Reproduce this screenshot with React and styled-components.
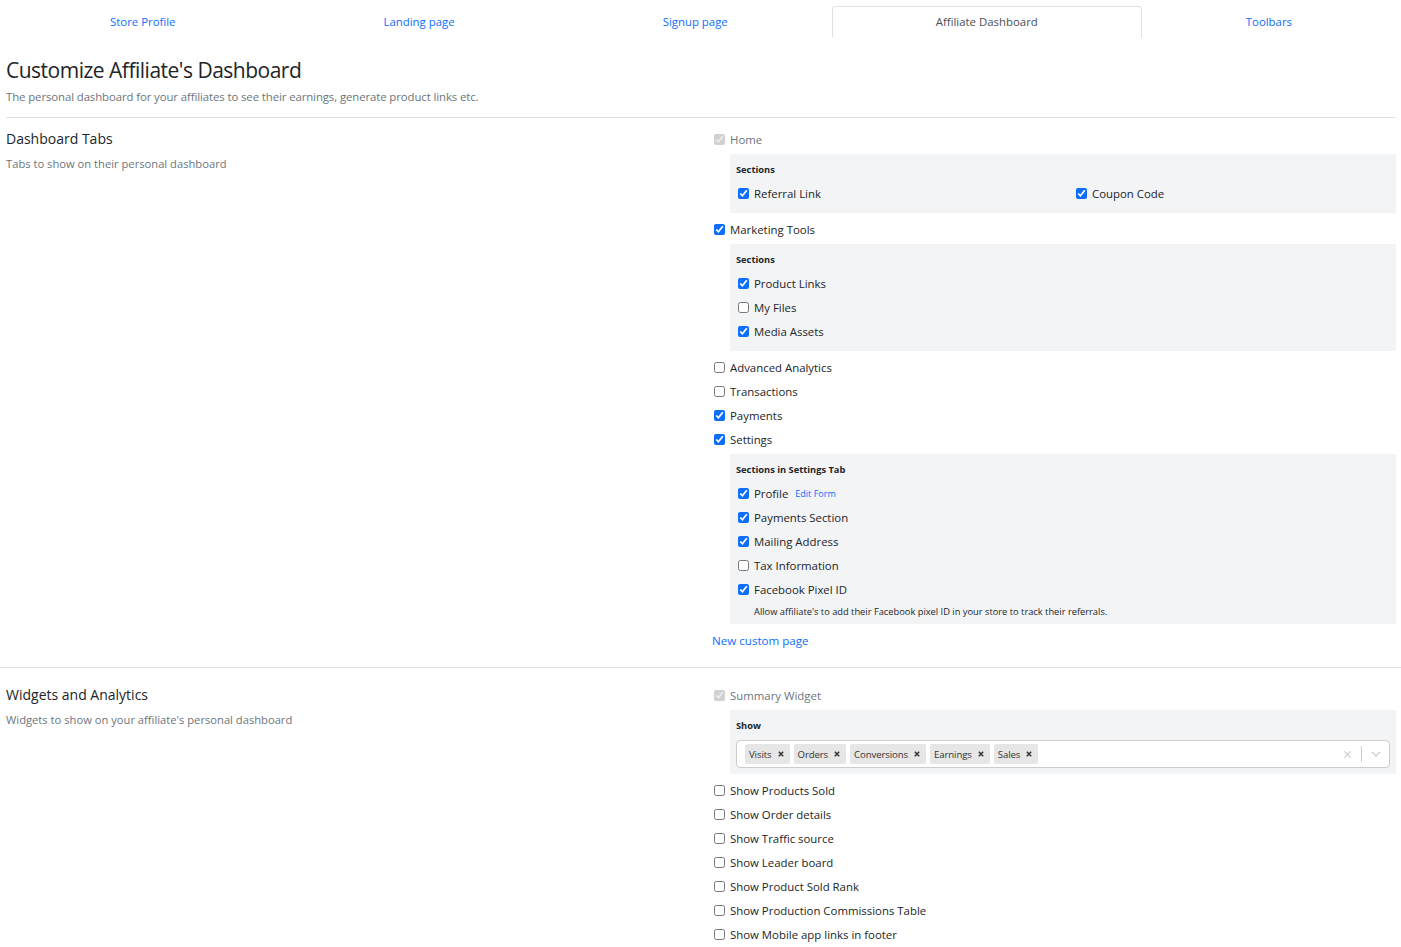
import React from 'react';
import styled, { createGlobalStyle } from 'styled-components';

const GlobalStyle = createGlobalStyle`
  html, body { margin: 0; padding: 0; background: #fff; }
  body { font-family: "Open Sans", "Noto Sans", sans-serif; color: #212529; }
  * { box-sizing: border-box; }
`;

const Page = styled.div`
  padding-top: 6px;
`;

const Inner = styled.div`
  padding: 0 5px 0 6px;
`;

const TabBar = styled.nav`
  display: flex;
  border-bottom: 1px solid #dee2e6;
`;

const Tab = styled.a`
  flex: 1 1 auto;
  text-align: center;
  font-size: 11.4px;
  line-height: 18px;
  padding: 6px 16px;
  text-decoration: none;
  cursor: pointer;
  border: 1px solid ${p => (p.$active ? '#dee2e6' : 'transparent')};
  border-bottom-color: ${p => (p.$active ? '#fff' : 'transparent')};
  border-radius: 4px 4px 0 0;
  margin-bottom: -1px;
  background: #fff;
  color: ${p => (p.$active ? '#495057' : '#0d6efd')};
`;

const PageTitle = styled.h1`
  margin: 19px 0 0;
  font-size: 21px;
  letter-spacing: -0.5px;
  line-height: 26px;
  font-weight: 400;
  color: #212529;
`;

const PageSub = styled.p`
  margin: 5px 0 0;
  font-size: 11.4px;
  letter-spacing: -0.1px;
  line-height: 18px;
  color: #6c757d;
`;

const Divider = styled.hr`
  margin: ${p => p.$mt || 0}px ${p => (p.$full ? '-5px' : 0)} 0 ${p => (p.$full ? '-6px' : 0)};
  border: 0;
  border-top: 1px solid #dee2e6;
  height: 0;
`;

const Section = styled.section`
  display: grid;
  grid-template-columns: 706px 1fr;
  padding: ${p => p.$pt}px 0 ${p => p.$pb}px;
`;

const SectionInfo = styled.div`
  padding-top: 2px;
`;

const SectionTitle = styled.h2`
  margin: 0;
  font-size: 14px;
  line-height: 20px;
  font-weight: 400;
  color: #212529;
`;

const SectionSub = styled.p`
  margin: 6px 0 0;
  font-size: 11.2px;
  line-height: 18px;
  color: #6c757d;
`;

const Options = styled.div`
  display: flex;
  flex-direction: column;
`;

const Row = styled.label`
  display: flex;
  align-items: center;
  height: 24px;
  gap: 5px;
  padding-left: ${p => p.$indent || 0}px;
  font-size: 11.4px;
  color: ${p => (p.$muted ? '#6c757d' : '#212529')};
`;

const Check = styled.input.attrs({ type: 'checkbox' })`
  width: 11px;
  height: 11px;
  margin: 0;
  accent-color: #0d6efd;
  flex: none;
`;

const SubBox = styled.div`
  margin: 3px 0 4px 18px;
  background: #f3f4f6;
  padding: 9px 6px ${p => (p.$pb != null ? p.$pb : 8)}px;
`;

const SubLabel = styled.div`
  font-size: 9.3px;
  line-height: 14px;
  font-weight: 700;
  margin-bottom: ${p => (p.$mb != null ? p.$mb : 4)}px;
  color: #212529;
`;

const TwoCols = styled.div`
  display: grid;
  grid-template-columns: 1fr 1fr;
  column-gap: 22px;
`;

const SmallLink = styled.a`
  font-size: 9px;
  color: #0d6efd;
  margin-left: 2px;
  text-decoration: none;
`;

const HelpText = styled.div`
  font-size: 9.3px;
  line-height: 14px;
  margin: 4px 0 -3px 18px;
  color: #212529;
`;

const AddLink = styled.a`
  display: block;
  margin-top: 4px;
  font-size: 11.6px;
  line-height: 18px;
  color: #0d6efd;
  text-decoration: none;
`;

const MultiSelect = styled.div`
  display: flex;
  align-items: center;
  height: 28px;
  background: #fff;
  border: 1px solid #ccc;
  border-radius: 4px;
  padding: 0 0 0 8px;
`;

const Tags = styled.div`
  flex: 1;
  display: flex;
  gap: 4px;
`;

const Tag = styled.span`
  display: inline-flex;
  align-items: center;
  gap: 6px;
  height: 20px;
  padding: 0 6px 0 4px;
  background: #e6e6e6;
  border-radius: 2px;
  font-size: 9.6px;
  letter-spacing: -0.1px;
  color: #333;
`;

const TagX = styled.span`
  display: flex;
  align-items: center;
`;

const Indicators = styled.div`
  display: flex;
  align-items: center;
  color: #ccc;
`;

const Indicator = styled.span`
  display: flex;
  align-items: center;
  justify-content: center;
  width: ${p => p.$w}px;
  height: 26px;
`;

const Sep = styled.span`
  width: 1px;
  height: 16px;
  background: #ccc;
`;

const Item = ({ label, checked, disabled, indent, children }) => (
  <Row $indent={indent} $muted={disabled}>
    <Check defaultChecked={checked} disabled={disabled} />
    {label}
    {children}
  </Row>
);

const tabs = ['Store Profile', 'Landing page', 'Signup page', 'Affiliate Dashboard', 'Toolbars'];

const widgets = [
  'Show Products Sold',
  'Show Order details',
  'Show Traffic source',
  'Show Leader board',
  'Show Product Sold Rank',
  'Show Production Commissions Table',
  'Show Mobile app links in footer',
];

export default function App() {
  return (
    <Page>
      <GlobalStyle />
      <Inner>
        <TabBar>
          {tabs.map(t => (
            <Tab key={t} $active={t === 'Affiliate Dashboard'}>{t}</Tab>
          ))}
        </TabBar>

        <PageTitle>Customize Affiliate's Dashboard</PageTitle>
        <PageSub>The personal dashboard for your affiliates to see their earnings, generate product links etc.</PageSub>
        <Divider $mt={11} />

        <Section $pt={9} $pb={17}>
          <SectionInfo>
            <SectionTitle>Dashboard Tabs</SectionTitle>
            <SectionSub>Tabs to show on their personal dashboard</SectionSub>
          </SectionInfo>
          <Options>
            <Item label="Home" checked disabled indent={2} />
            <SubBox>
              <SubLabel>Sections</SubLabel>
              <TwoCols>
                <Item label="Referral Link" checked indent={2} />
                <Item label="Coupon Code" checked indent={2} />
              </TwoCols>
            </SubBox>
            <Item label="Marketing Tools" checked indent={2} />
            <SubBox>
              <SubLabel>Sections</SubLabel>
              <Item label="Product Links" checked indent={2} />
              <Item label="My Files" indent={2} />
              <Item label="Media Assets" checked indent={2} />
            </SubBox>
            <Item label="Advanced Analytics" indent={2} />
            <Item label="Transactions" indent={2} />
            <Item label="Payments" checked indent={2} />
            <Item label="Settings" checked indent={2} />
            <SubBox>
              <SubLabel>Sections in Settings Tab</SubLabel>
              <Item label="Profile" checked indent={2}>
                <SmallLink>Edit Form</SmallLink>
              </Item>
              <Item label="Payments Section" checked indent={2} />
              <Item label="Mailing Address" checked indent={2} />
              <Item label="Tax Information" indent={2} />
              <Item label="Facebook Pixel ID" checked indent={2} />
              <HelpText>Allow affiliate's to add their Facebook pixel ID in your store to track their referrals.</HelpText>
            </SubBox>
            <AddLink>New custom page</AddLink>
          </Options>
        </Section>

        <Divider $full />

        <Section $pt={15} $pb={1}>
          <SectionInfo>
            <SectionTitle>Widgets and Analytics</SectionTitle>
            <SectionSub>Widgets to show on your affiliate's personal dashboard</SectionSub>
          </SectionInfo>
          <Options>
            <Item label="Summary Widget" checked disabled indent={2} />
            <SubBox $pb={6}>
              <SubLabel $mb={7}>Show</SubLabel>
              <MultiSelect>
                <Tags>
                  {['Visits', 'Orders', 'Conversions', 'Earnings', 'Sales'].map(t => (
                    <Tag key={t}>
                      {t}
                      <TagX>
                        <svg width="6" height="6" viewBox="0 0 6 6"><path d="M0.8 0.8l4.4 4.4M5.2 0.8l-4.4 4.4" stroke="#333" strokeWidth="1.5" /></svg>
                      </TagX>
                    </Tag>
                  ))}
                </Tags>
                <Indicators>
                  <Indicator $w={28}>
                    <svg width="9" height="9" viewBox="0 0 10 10"><path d="M1.5 1.5l7 7M8.5 1.5l-7 7" stroke="#ccc" strokeWidth="1.4" /></svg>
                  </Indicator>
                  <Sep />
                  <Indicator $w={27}>
                    <svg width="10" height="6" viewBox="0 0 10 6"><path d="M1 1l4 4 4-4" fill="none" stroke="#ccc" strokeWidth="1.3" /></svg>
                  </Indicator>
                </Indicators>
              </MultiSelect>
            </SubBox>
            {widgets.map(w => (
              <Item key={w} label={w} indent={2} />
            ))}
          </Options>
        </Section>
      </Inner>
    </Page>
  );
}
